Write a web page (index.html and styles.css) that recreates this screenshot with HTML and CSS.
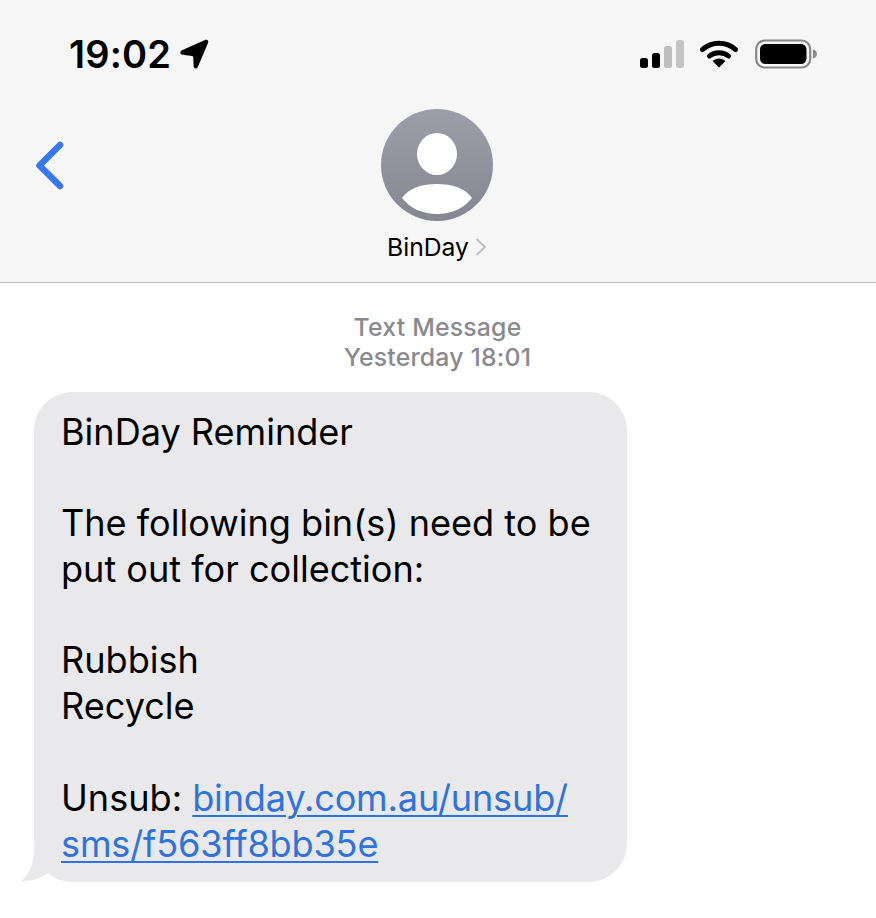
FILE: index.html
```html
<!DOCTYPE html>
<html lang="en">
<head>
    <meta charset="UTF-8">
    <meta name="viewport" content="width=device-width, initial-scale=1.0">
    <title>BinDay</title>
    <link rel="stylesheet" href="styles.css">
</head>
<body>
    <header class="top">
        <div class="status-bar">
            <div class="clock">
                <span>19:02</span>
                <svg class="arrow" width="30" height="32" viewBox="0 0 30 32">
                    <path d="M26 2 L3 12.3 C0.5 13.5 1 16.5 3.5 16.8 L13 18 C13.8 18.1 14.3 18.6 14.3 19.4 L14.6 28 C14.7 30.8 17.6 31.4 18.8 29 L29 5 C30 2.6 28.4 1 26 2 Z" fill="#000"/>
                </svg>
            </div>
            <div class="status-icons">
                <svg width="44" height="28" viewBox="0 0 44 28">
                    <rect x="0" y="18" width="8" height="10" rx="2.5" fill="#000"/>
                    <rect x="12" y="13" width="8" height="15" rx="2.5" fill="#000"/>
                    <rect x="24" y="6" width="8" height="22" rx="2.5" fill="#bdbdbd"/>
                    <rect x="36" y="0" width="8" height="28" rx="2.5" fill="#c4c4c4"/>
                </svg>
                <svg width="38" height="28" viewBox="0 0 38 28">
                    <path d="M2.5 9.5 C11.5 1 26.5 1 35.5 9.5" fill="none" stroke="#000" stroke-width="5" stroke-linecap="round"/>
                    <path d="M9.5 16 C14.5 11.5 23.5 11.5 28.5 16" fill="none" stroke="#000" stroke-width="5" stroke-linecap="round"/>
                    <path d="M12.5 21 C16.5 17.6 21.5 17.6 25.5 21 L19 27.5 Z" fill="#000"/>
                </svg>
                <svg class="battery" width="62" height="30" viewBox="0 0 62 30">
                    <rect x="1.2" y="1.5" width="54" height="27" rx="8.5" fill="none" stroke="#888" stroke-width="2.2"/>
                    <rect x="5" y="5" width="46.5" height="20" rx="5.5" fill="#000"/>
                    <path d="M58 10.5 C60.4 11 62 12.8 62 15 C62 17.2 60.4 19 58 19.5 Z" fill="#8e8e8e"/>
                </svg>
            </div>
        </div>
        <div class="nav">
            <a class="back" href="#">
                <svg width="32" height="56" viewBox="0 0 32 56">
                    <path d="M26 7 L5.5 27.5 L26 48" fill="none" stroke="#3478f6" stroke-width="6.5" stroke-linecap="round" stroke-linejoin="round"/>
                </svg>
            </a>
            <div class="contact">
                <svg class="avatar" width="112" height="112" viewBox="0 0 112 112">
                    <defs>
                        <linearGradient id="avatarFill" x1="0" y1="0" x2="0" y2="1">
                            <stop offset="0" stop-color="#9c9fa9"/>
                            <stop offset="1" stop-color="#85878f"/>
                        </linearGradient>
                    </defs>
                    <circle cx="56" cy="56" r="56" fill="url(#avatarFill)"/>
                    <ellipse cx="56" cy="45" rx="20" ry="21" fill="#fff"/>
                    <path d="M21 89 C28 79 41 75 56 75 C71 75 84 79 91 89 C82 100 70 105 56 105 C42 105 30 100 21 89 Z" fill="#fff"/>
                </svg>
                <div class="name">
                    <span>BinDay</span>
                    <svg width="12" height="20" viewBox="0 0 12 20">
                        <path d="M1.5 2 L10 10 L1.5 18" fill="none" stroke="#bcbcc0" stroke-width="1.8"/>
                    </svg>
                </div>
            </div>
        </div>
    </header>

    <main class="thread">
        <div class="stamp">
            <div>Text Message</div>
            <div>Yesterday 18:01</div>
        </div>
        <div class="bubble">
            <p>BinDay Reminder</p>
            <p>The following bin(s) need to be<br>put out for collection:</p>
            <p>Rubbish<br>Recycle</p>
            <p>Unsub: <a href="#">binday.com.au/unsub/<br>sms/f563ff8bb35e</a></p>
            <svg class="tail" width="34" height="34" viewBox="0 0 34 34">
                <path d="M13 0 C13 14 9 25 0 32 C9 32.5 19 30 27 24 L34 0 Z" fill="#e9e9eb"/>
            </svg>
        </div>
    </main>
</body>
</html>
```

FILE: styles.css
```css
* {
    margin: 0;
    padding: 0;
    box-sizing: border-box;
}

body {
    font-family: Inter, "Liberation Sans", sans-serif;
    background: #fff;
    color: #000;
}

.top {
    height: 283px;
    background: #f6f6f7;
    border-bottom: 1px solid #b9b7bd;
}

.status-bar {
    display: flex;
    justify-content: space-between;
    align-items: center;
    height: 109px;
    padding: 0 59px 1px 69px;
}

.clock {
    display: flex;
    align-items: center;
    gap: 8px;
    font-size: 38px;
    font-weight: 600;
    letter-spacing: 0.2px;
}

.status-icons {
    display: flex;
    align-items: center;
    gap: 16px;
}

.battery {
    margin-left: 1px;
}

.nav {
    display: grid;
    grid-template-columns: 1fr auto 1fr;
    padding-right: 2px;
}

.back {
    padding: 29px 0 0 34px;
}

.contact {
    display: flex;
    flex-direction: column;
    align-items: center;
    gap: 11px;
}

.avatar {
    display: block;
}

.name {
    display: flex;
    align-items: center;
    gap: 6px;
    font-size: 24.7px;
    line-height: 30px;
}

.thread {
    padding: 29px 34px 0;
}

.stamp {
    text-align: center;
    color: #8a8a8e;
    font-size: 24.8px;
    font-weight: 500;
    line-height: 30px;
    letter-spacing: 0.2px;
    margin-bottom: 20px;
    padding-right: 1px;
}

.bubble {
    position: relative;
    display: flex;
    flex-direction: column;
    gap: 45.8px;
    width: 593px;
    padding: 17.5px 20px 14.5px 27px;
    background: #e9e9eb;
    border-radius: 38px;
    font-size: 36.1px;
    line-height: 45.8px;
}

.bubble a {
    color: #2f73e0;
    text-decoration: underline;
    text-decoration-thickness: 2px;
    text-underline-offset: 4px;
    letter-spacing: -0.15px;
}

.tail {
    position: absolute;
    left: -13px;
    bottom: -1px;
}
```
